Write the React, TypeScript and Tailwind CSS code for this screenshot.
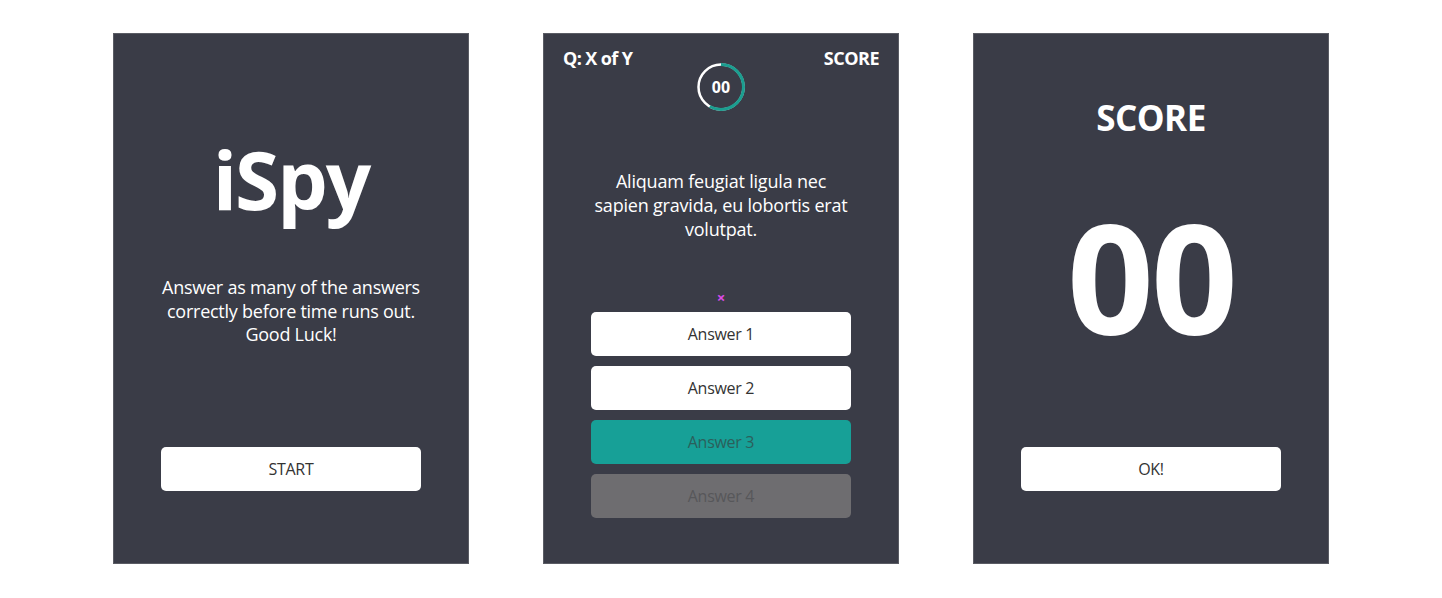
const font = { fontFamily: '"Open Sans", "Liberation Sans", sans-serif' };

const Panel = ({ children }: { children: React.ReactNode }) => (
  <div className="w-[356px] h-[531px] bg-[#3a3c47] border border-[#5a5c64] flex flex-col items-center text-white">
    {children}
  </div>
);

const WhiteButton = ({ label }: { label: string }) => (
  <div className="w-[260px] h-[44px] bg-white rounded-[5px] flex items-center justify-center text-[16px] text-[#333333] tracking-[-0.3px]">
    {label}
  </div>
);

const Timer = () => {
  const r = 22.5;
  const c = 2 * Math.PI * r;
  return (
    <svg width="48" height="48" viewBox="0 0 48 48">
      <circle cx="24" cy="24" r={r} fill="none" stroke="#ffffff" strokeWidth="2.5" />
      <circle
        cx="24"
        cy="24"
        r={r}
        fill="none"
        stroke="#1b9e90"
        strokeWidth="3"
        strokeDasharray={`${c * 0.58} ${c}`}
        transform="rotate(-90 24 24)"
      />
      <text x="24" y="29.5" textAnchor="middle" fill="#ffffff" fontSize="16" fontWeight="700" fontFamily='"Open Sans", sans-serif'>
        00
      </text>
    </svg>
  );
};

const answers = [
  { label: 'Answer 1', cls: 'bg-white text-[#333333]' },
  { label: 'Answer 2', cls: 'bg-white text-[#333333]' },
  { label: 'Answer 3', cls: 'bg-[#17a097] text-[#2b5f5b]' },
  { label: 'Answer 4', cls: 'bg-[#6e6d70] text-[#57575a]' },
];

export default function App() {
  return (
    <div className="min-h-screen bg-white flex justify-center gap-[74px] pt-[33px]" style={font}>
      {/* Start screen */}
      <Panel>
        <div className="mt-[105px] h-[80px] leading-[80px] text-[80px] font-bold tracking-[-2px]">iSpy</div>
        <p className="mt-[57px] w-[320px] text-center text-[18px] leading-[23.5px] tracking-[-0.25px]">
          Answer as many of the answers
          <br />
          correctly before time runs out.
          <br />
          Good Luck!
        </p>
        <div className="mt-[100px]">
          <WhiteButton label="START" />
        </div>
      </Panel>

      {/* Question screen */}
      <Panel>
        <div className="w-full grid grid-cols-3 items-start px-[19px] pt-[12px]">
          <span className="text-[18px] leading-[24px] font-bold tracking-[-0.6px]">Q: X of Y</span>
          <div className="flex justify-center mt-[17px]">
            <Timer />
          </div>
          <span className="text-right text-[18px] leading-[24px] font-bold tracking-[-0.5px]">SCORE</span>
        </div>
        <p className="mt-[58px] w-[300px] text-center text-[18px] leading-[24px] tracking-[-0.2px]">
          Aliquam feugiat ligula nec
          <br />
          sapien gravida, eu lobortis erat
          <br />
          volutpat.
        </p>
        <div className="mt-[51px] h-[10px] leading-[10px] text-[15px] font-bold text-[#d94be6]">×</div>
        <div className="mt-[10px] flex flex-col gap-[10px]">
          {answers.map((a) => (
            <div
              key={a.label}
              className={`w-[260px] h-[44px] rounded-[5px] flex items-center justify-center text-[16px] tracking-[-0.3px] ${a.cls}`}
            >
              {a.label}
            </div>
          ))}
        </div>
      </Panel>

      {/* Score screen */}
      <Panel>
        <div className="mt-[66px] h-[36px] leading-[36px] text-[35px] font-bold tracking-[-0.5px]">SCORE</div>
        <div className="mt-[66px] h-[150px] leading-[150px] text-[152px] font-bold tracking-[-3px]">00</div>
        <div className="mt-[95px]">
          <WhiteButton label="OK!" />
        </div>
      </Panel>
    </div>
  );
}
